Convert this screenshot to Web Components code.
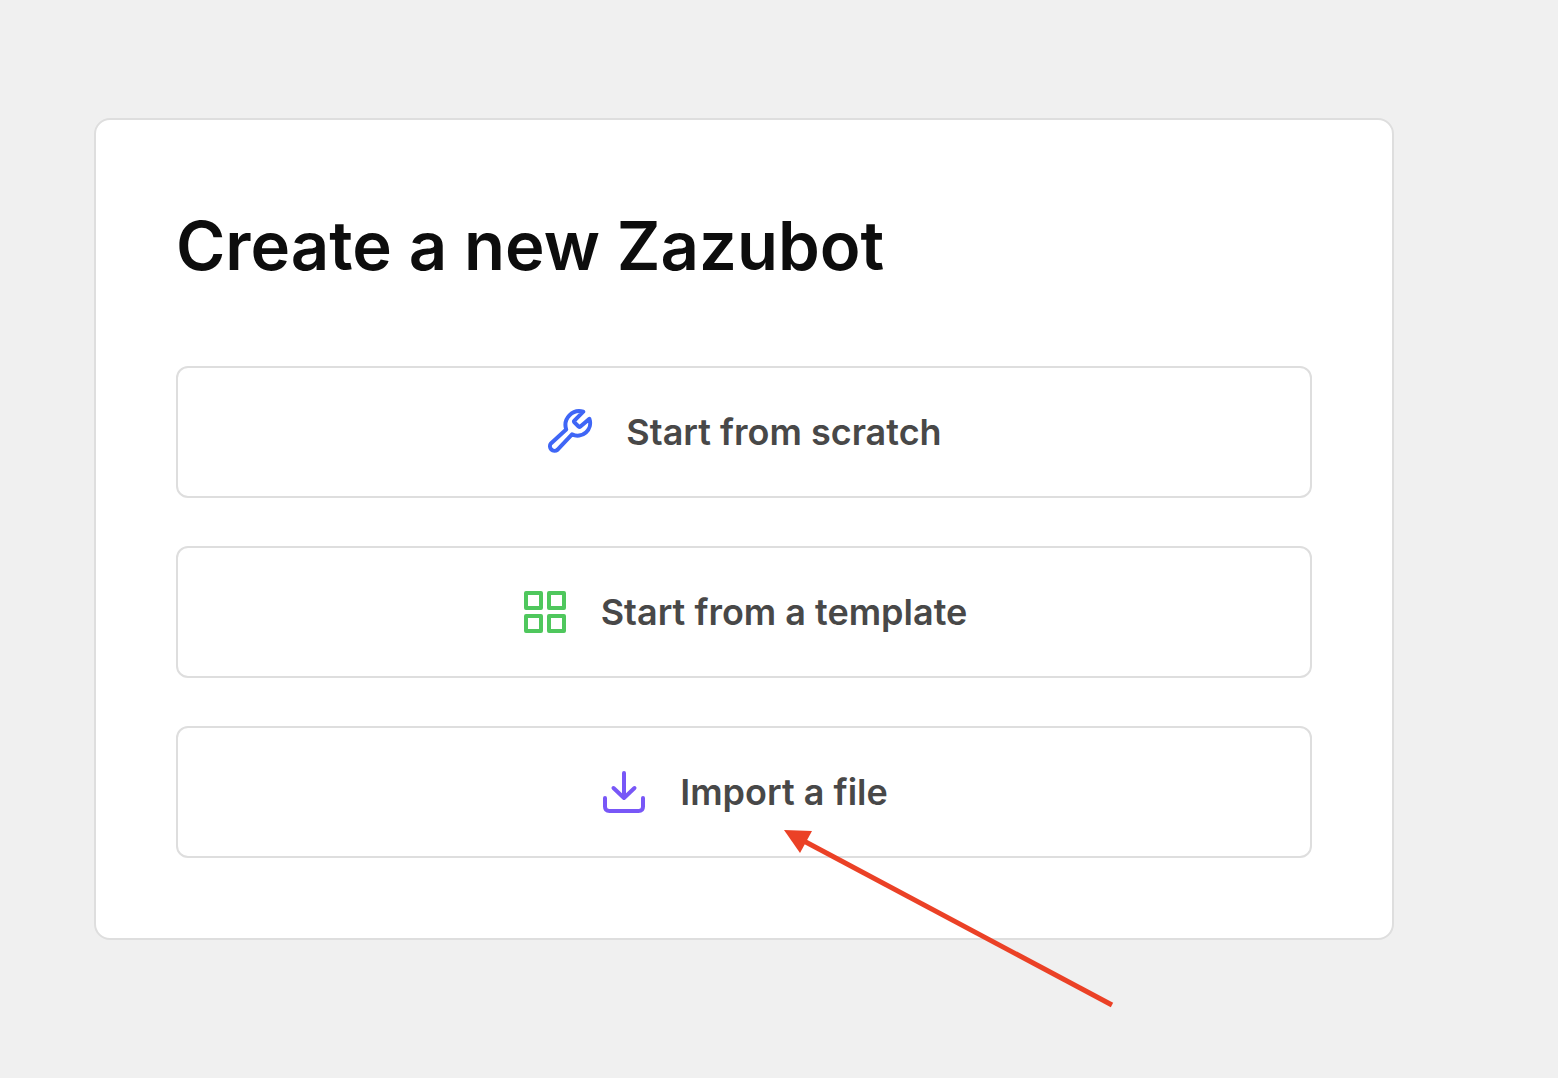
<!DOCTYPE html>
<html lang="en">
<head>
<meta charset="utf-8">
<meta name="viewport" content="width=device-width, initial-scale=1">
<title>Create a new Zazubot</title>
<style>
  body { margin: 0; background: #f0f0f0; font-family: Inter, "Liberation Sans", sans-serif; }
</style>
</head>
<body>
<create-page>
  <create-card heading="Create a new Zazubot">
    <option-button icon="wrench">Start from scratch</option-button>
    <option-button icon="grid">Start from a template</option-button>
    <option-button icon="import">Import a file<pointer-arrow slot="callout"></pointer-arrow></option-button>
  </create-card>
</create-page>

<script>
const icons = {
  wrench: ['#3f66f6', '<path d="M37.3 3.700 28.400 12.600Q27.600 13.400 28.400 14.300L32.600 18.500Q33.500 19.300 34.400 18.500L43.400 10.900A12.600 12.600 0 0 1 26 26.400L11.400 41.800A4.600 4.600 0 0 1 4.900 35.400L20.200 21.500A14 14 0 0 1 37.300 3.700Z"/>'],
  grid: ['#4fc75d', '<path d="M5 5h15v15H5zM28 5h15v15H28zM5 28h15v15H5zM28 28h15v15H28z" stroke-width="4"/>'],
  import: ['#7857f7', '<path d="M24 5V30M13.5 20 24 30 34.5 20M5 30v8.500q0 4.500 4.500 4.500h29q4.500 0 4.500-4.500V30"/>']
};

class AppElement extends HTMLElement {
  constructor() {
    super();
    this.attachShadow({ mode: 'open' });
  }
  connectedCallback() {
    this.shadowRoot.innerHTML = this.render();
  }
}

customElements.define('create-page', class extends AppElement {
  render() {
    return `
      <style>
        :host { display: block; padding: 118px 164px 118px 94px; }
      </style>
      <main><slot></slot></main>`;
  }
});

customElements.define('create-card', class extends AppElement {
  render() {
    return `
      <style>
        :host { display: block; box-sizing: border-box; padding: 80px; background: #fff; border: 2px solid #dedede; border-radius: 16px; }
        h1 { margin: 0 0 74px; font-size: 67px; line-height: 92px; font-weight: 600; color: #0d0d0d; }
        .options { display: flex; flex-direction: column; gap: 48px; }
      </style>
      <h1>${this.getAttribute('heading')}</h1>
      <div class="options"><slot></slot></div>`;
  }
});

customElements.define('option-button', class extends AppElement {
  render() {
    const [color, shape] = icons[this.getAttribute('icon')];
    return `
      <style>
        :host { display: block; position: relative; }
        button { display: flex; align-items: center; justify-content: center; gap: 32px; box-sizing: border-box; width: 100%; margin: 0; padding: 40px; background: #fff; border: 2px solid #dedede; border-radius: 12px; font: 600 36px/48px Inter, "Liberation Sans", sans-serif; color: #484848; cursor: pointer; }
        button:hover { border-color: #b8b8b8; }
        svg { display: block; flex: none; width: 48px; height: 48px; fill: none; stroke: ${color}; stroke-width: 4; stroke-linecap: round; stroke-linejoin: round; }
      </style>
      <button type="button">
        <svg viewBox="0 0 48 48" aria-hidden="true">${shape}</svg>
        <span><slot></slot></span>
      </button>
      <slot name="callout"></slot>`;
  }
});

customElements.define('pointer-arrow', class extends AppElement {
  render() {
    return `
      <style>
        :host { display: block; position: absolute; top: 102px; left: calc(50% + 40px); pointer-events: none; }
        svg { display: block; width: 332px; height: 182px; }
      </style>
      <svg viewBox="0 0 332 182" aria-hidden="true">
        <path d="M18 12 328 177" stroke="#eb4126" stroke-width="5"/>
        <path d="M0 2 28 3 16 25Z" fill="#eb4126"/>
      </svg>`;
  }
});
</script>
</body>
</html>
